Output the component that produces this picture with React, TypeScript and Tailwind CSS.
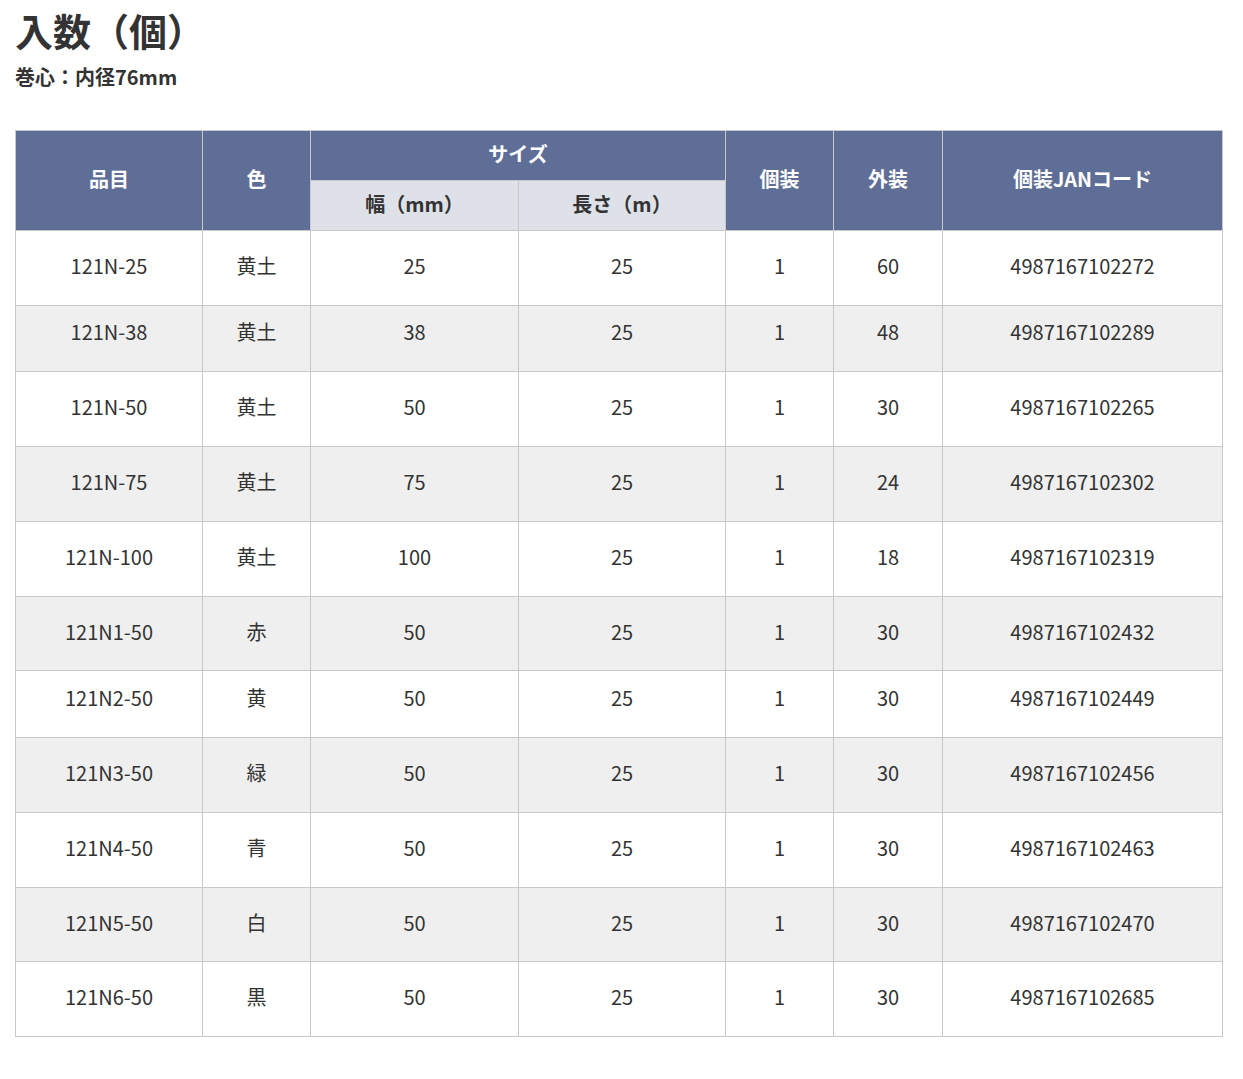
const rows = [
  { item: "121N-25", color: "黄土", width: "25", length: "25", inner: "1", outer: "60", jan: "4987167102272", h: "h-[75px]" },
  { item: "121N-38", color: "黄土", width: "38", length: "25", inner: "1", outer: "48", jan: "4987167102289", h: "h-[66px] [&>td]:pb-[13px]" },
  { item: "121N-50", color: "黄土", width: "50", length: "25", inner: "1", outer: "30", jan: "4987167102265", h: "h-[75px]" },
  { item: "121N-75", color: "黄土", width: "75", length: "25", inner: "1", outer: "24", jan: "4987167102302", h: "h-[75px]" },
  { item: "121N-100", color: "黄土", width: "100", length: "25", inner: "1", outer: "18", jan: "4987167102319", h: "h-[75px]" },
  { item: "121N1-50", color: "赤", width: "50", length: "25", inner: "1", outer: "30", jan: "4987167102432", h: "h-[74px]" },
  { item: "121N2-50", color: "黄", width: "50", length: "25", inner: "1", outer: "30", jan: "4987167102449", h: "h-[67px] [&>td]:pb-[13px]" },
  { item: "121N3-50", color: "緑", width: "50", length: "25", inner: "1", outer: "30", jan: "4987167102456", h: "h-[75px]" },
  { item: "121N4-50", color: "青", width: "50", length: "25", inner: "1", outer: "30", jan: "4987167102463", h: "h-[75px]" },
  { item: "121N5-50", color: "白", width: "50", length: "25", inner: "1", outer: "30", jan: "4987167102470", h: "h-[74px]" },
  { item: "121N6-50", color: "黒", width: "50", length: "25", inner: "1", outer: "30", jan: "4987167102685", h: "h-[75px]" },
]

const th = "border border-[#c8c8c8] bg-[#5f6e96] pb-[4px] text-white"
const sub = "border border-[#c8c8c8] bg-[#dfe1e8] pb-[4px] text-[#333]"
const td = "border border-[#c8c8c8] pb-[4px]"

export default function App() {
  return (
    <div className="bg-white px-[15px] pt-[6px] pb-10 text-[#333] font-['Noto_Sans_CJK_JP','Noto_Sans',sans-serif]">
      {/* Heading */}
      <h1 className="text-[38px] font-bold leading-[48px]">入数（個）</h1>
      <p className="mt-[10px] text-[20px] font-bold leading-[26px]">巻心：内径76mm</p>

      {/* Spec table */}
      <table className="mt-[40px] w-[1207px] table-fixed border-collapse text-center text-[20px]">
        <colgroup>
          <col className="w-[187px]" />
          <col className="w-[108px]" />
          <col className="w-[208px]" />
          <col className="w-[207px]" />
          <col className="w-[108px]" />
          <col className="w-[109px]" />
          <col className="w-[280px]" />
        </colgroup>
        <thead className="font-bold">
          <tr className="h-[50px]">
            <th rowSpan={2} className={th}>品目</th>
            <th rowSpan={2} className={th}>色</th>
            <th colSpan={2} className={th}>サイズ</th>
            <th rowSpan={2} className={th}>個装</th>
            <th rowSpan={2} className={th}>外装</th>
            <th rowSpan={2} className={th}>個装JANコード</th>
          </tr>
          <tr className="h-[50px]">
            <th className={sub}>幅（mm）</th>
            <th className={sub}>長さ（m）</th>
          </tr>
        </thead>
        <tbody>
          {rows.map((r, i) => (
            <tr key={r.item} className={`${r.h} ${i % 2 === 1 ? "bg-[#efefef]" : "bg-white"}`}>
              <td className={td}>{r.item}</td>
              <td className={td}>{r.color}</td>
              <td className={td}>{r.width}</td>
              <td className={td}>{r.length}</td>
              <td className={td}>{r.inner}</td>
              <td className={td}>{r.outer}</td>
              <td className={td}>{r.jan}</td>
            </tr>
          ))}
        </tbody>
      </table>
    </div>
  )
}
